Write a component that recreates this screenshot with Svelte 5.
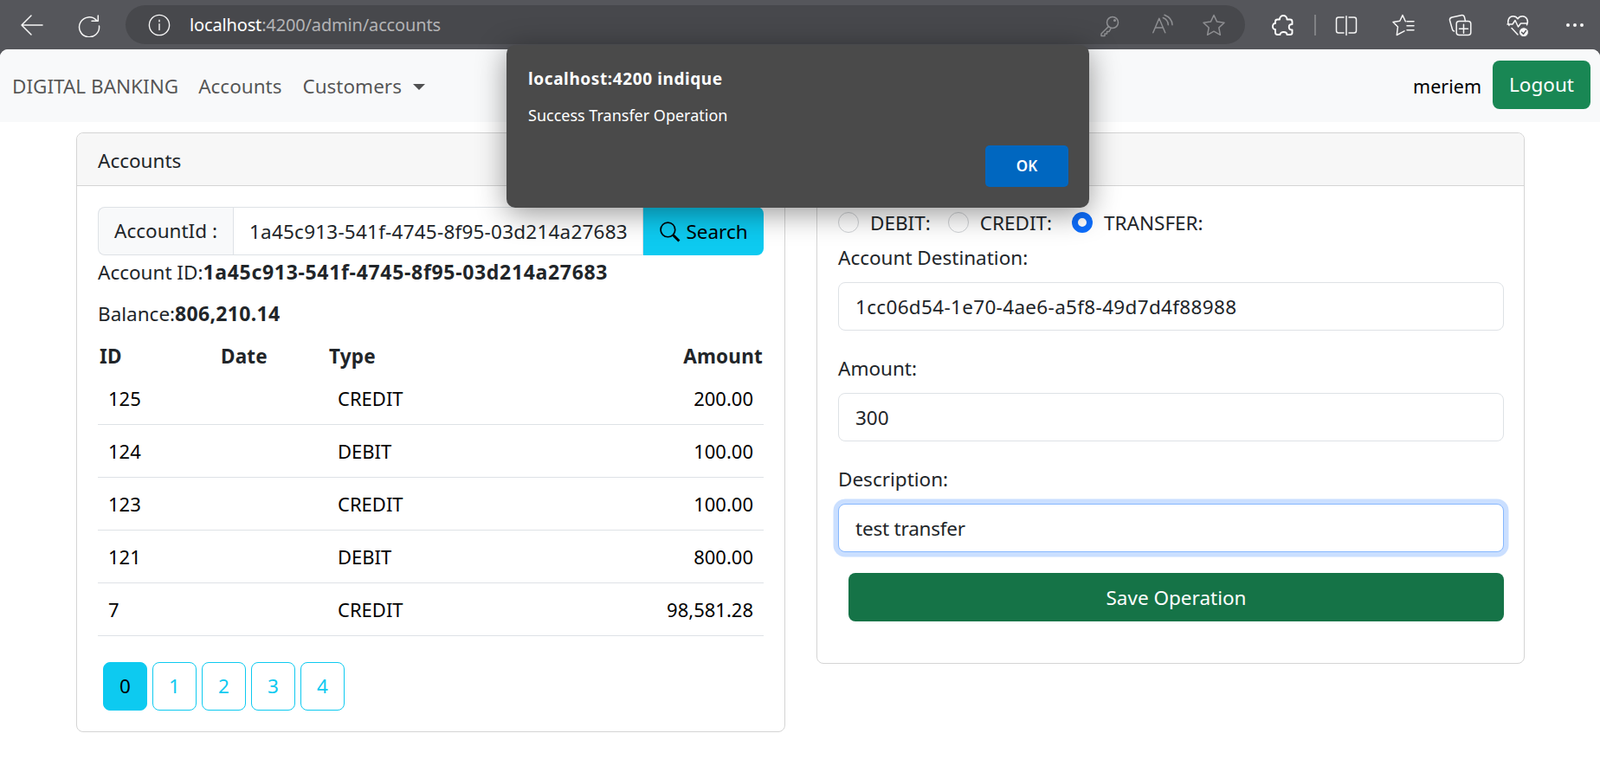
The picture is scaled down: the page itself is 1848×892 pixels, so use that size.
<script>
  const rows = [
    { id: '125', type: 'CREDIT', amount: '200.00' },
    { id: '124', type: 'DEBIT', amount: '100.00' },
    { id: '123', type: 'CREDIT', amount: '100.00' },
    { id: '121', type: 'DEBIT', amount: '800.00' },
    { id: '7', type: 'CREDIT', amount: '98,581.28' }
  ];
  const pages = [0, 1, 2, 3, 4];
</script>

<div class="window">
  <header class="toolbar">
    <svg class="ic back" viewBox="0 0 28 28"><path d="M26 14H2M13 3L2 14l11 11"/></svg>
    <svg class="ic reload" viewBox="0 0 28 28"><path d="M22.500 8.500A11.500 11.500 0 1 0 25.500 15M24.300 3v6.300H17"/></svg>
    <div class="omnibox">
      <svg class="ic info" viewBox="0 0 28 28"><circle cx="14" cy="14" r="12.500"/><path d="M14 12.500v7.500M14 7.800v1.800"/></svg>
      <span class="url"><b>localhost</b>:4200/admin/accounts</span>
      <div class="omni-right">
        <svg class="ic dim" viewBox="0 0 28 28"><circle cx="17" cy="11" r="6.500"/><path d="M12.500 15.500L4 24v2.500h4v-2.500h2.500v-2.500h2.500l2-3.500"/><circle cx="19.500" cy="8.500" r=".8"/></svg>
        <svg class="ic dim" viewBox="0 0 28 28"><path d="M3.800 22.800L10.800 6.200L17.800 22.800M6.300 17h9M15.300 5.500c3.500 1.500 6 4.500 6 8.300M17 2.200c5 2 9 6 9 11.600"/></svg>
        <svg class="ic dim" viewBox="0 0 28 28"><path d="M14 2.500l3.600 7.600 8.400 1.100-6.200 5.800 1.600 8.300-7.400-4.100-7.400 4.100 1.600-8.300L2 11.200l8.400-1.100z"/></svg>
      </div>
    </div>
    <div class="tools">
      <svg class="ic strong" viewBox="0 0 28 28"><path d="M10 7.500c0-6 8.500-6 8.500 0h3.500c1.500 0 2.500 1 2.500 2.500v3c-5 0-5 6.500 0 6.500v3.500c0 1-1 2-2.500 2h-3.500c0-4-8-4-8 0H7.500c-1.500 0-2.500-1-2.500-2.500V19c-4 .5-4-7.500 0-7V10c0-1.500 1-2.500 2.500-2.500z"/></svg>
      <span class="sep"></span>
      <svg class="ic" viewBox="0 0 28 28"><path d="M11 5H5c-1.500 0-2.500 1-2.500 2.500v13c0 1.500 1 2.500 2.500 2.500h6M17 5h6c1.500 0 2.500 1 2.500 2.500v13c0 1.500-1 2.500-2.500 2.500h-6M14 3.800v21.700"/></svg>
      <svg class="ic" viewBox="0 0 28 28"><path d="M16.300 9.800L13 2.500L9.800 9.300L2 10.500L7.500 16L6.300 25.500L15 20.800M18 9.800h8M18 14.800h8M18 19.800h8"/></svg>
      <svg class="ic" viewBox="0 0 28 28"><rect x="9.200" y="9.500" width="16.600" height="16" rx="3"/><path d="M17.500 13.200v10M12.500 18.200h10M19.500 9.500L18.500 5c-.4-1.700-1.500-2.600-3-2.500L4 5c-2 .5-2.800 1.800-2.500 3.500L4.500 19c.3 1.200 1 1.800 2 2"/></svg>
      <svg class="ic" viewBox="0 0 28 28"><path d="M4 14.500C1 9 4 3.800 8.500 3.800c2.500 0 4.500 1.200 5.500 3 1-1.800 3-3 5.500-3 4.500 0 7.500 5 5 10M2 13h6l3-4.500 3.500 7.500 3-4h7.500M7 17.500l7 7.500"/><circle class="solid" cx="21" cy="22.200" r="5.500"/><path class="check" d="M18.500 22.200l2 2 3-3.800"/></svg>
      <span class="dots"><i></i><i></i><i></i></span>
    </div>
  </header>

  <main class="page">
    <nav class="navbar">
      <span class="brand">DIGITAL BANKING</span>
      <span class="link">Accounts</span>
      <span class="link">Customers<i class="caret"></i></span>
      <span class="spacer"></span>
      <span class="user">meriem</span>
      <button class="logout">Logout</button>
    </nav>

    <div class="columns">
      <section class="card">
        <div class="card-head">Accounts</div>
        <div class="card-body left-body">
          <div class="group">
            <span class="addon">AccountId :</span>
            <input class="gi" value="1a45c913-541f-4745-8f95-03d214a27683" />
            <button class="search">
              <svg viewBox="0 0 24 24"><circle cx="10" cy="10" r="8"/><path class="thick" d="M16 16l6.500 6.500"/></svg>
              Search
            </button>
          </div>
          <p class="line first">Account ID:<b>1a45c913-541f-4745-8f95-03d214a27683</b></p>
          <p class="line second">Balance:<b>806,210.14</b></p>
          <table>
            <thead>
              <tr><th class="c1">ID</th><th class="c2">Date</th><th class="c3">Type</th><th class="num">Amount</th></tr>
            </thead>
            <tbody>
              {#each rows as r}
                <tr><td class="tid">{r.id}</td><td></td><td class="ttype">{r.type}</td><td class="num">{r.amount}</td></tr>
              {/each}
            </tbody>
          </table>
          <div class="pager">
            {#each pages as p}
              <button class="pg" class:active={p === 0}>{p}</button>
            {/each}
          </div>
        </div>
      </section>

      <section class="card right">
        <div class="card-head"></div>
        <div class="card-body">
          <div class="radios">
            <span class="radio"></span><span class="rl r1">DEBIT:</span>
            <span class="radio"></span><span class="rl r2">CREDIT:</span>
            <span class="radio on"></span><span class="rl">TRANSFER:</span>
          </div>
          <label class="lab">Account Destination:</label>
          <input class="fc uuid" value="1cc06d54-1e70-4ae6-a5f8-49d7d4f88988" />
          <label class="lab next">Amount:</label>
          <input class="fc" value="300" />
          <label class="lab next">Description:</label>
          <input class="fc focus" value="test transfer" />
          <div class="save-wrap"><button class="save">Save Operation</button></div>
        </div>
      </section>
    </div>
  </main>

  <div class="dialog" role="alertdialog">
    <div class="d-title">localhost:4200 indique</div>
    <div class="d-msg">Success Transfer Operation</div>
    <div class="d-foot"><button class="ok">OK</button></div>
  </div>
</div>

<style>
  :global(body) {
    margin: 0;
    background: #55565b;
    overflow: hidden;
  }
  .window {
    width: 1848px;
    height: 892px;
    position: relative;
    overflow: hidden;
    display: flex;
    flex-direction: column;
    font-family: "Noto Sans", "Open Sans", sans-serif;
    font-size: 22.500px;
    line-height: 35px;
    color: #212529;
  }
  button, input { font: inherit; }
  .toolbar {
    height: 57px;
    flex: none;
    display: flex;
    align-items: flex-start;
    background: #55565b;
    box-sizing: border-box;
    padding: 6px 15px 0 23px;
  }
  .ic {
    width: 28px;
    height: 28px;
    fill: none;
    stroke: #f6f6f6;
    stroke-width: 1.500;
    stroke-linecap: round;
    stroke-linejoin: round;
    flex: none;
  }
  .ic .solid { fill: #f6f6f6; stroke: #55565b; stroke-width: 1; }
  .ic .check { stroke: #55565b; stroke-width: 1.500; }
  .strong { stroke-width: 1.900; stroke: #fff; }
  .back, .reload { margin-top: 8.500px; }
  .reload { margin-left: 38px; margin-right: 28px; }
  .omnibox {
    width: 1293px;
    height: 45px;
    background: #47484c;
    border-radius: 23px;
    display: flex;
    align-items: center;
    padding-left: 26px;
    box-sizing: border-box;
  }
  .info { width: 26px; height: 26px; }
  .url {
    margin-left: 22px;
    font-size: 20px;
    color: #b4b4b6;
    letter-spacing: -0.150px;
  }
  .url b { font-weight: 400; color: #fff; }
  .omni-right {
    margin-left: auto;
    display: flex;
    gap: 32px;
    padding-right: 22px;
  }
  .dim { stroke: #8e8f92; stroke-width: 1.500; }
  .tools {
    display: flex;
    align-items: center;
    height: 45px;
    margin-left: 30px;
    gap: 38px;
  }
  .sep {
    width: 2px;
    height: 24px;
    background: #808185;
    margin: 0 -17.500px 0 -16px;
  }
  .dots { display: flex; gap: 4px; width: 28px; justify-content: center; }
  .dots i { width: 4px; height: 4px; border-radius: 50%; background: #f6f6f6; }

  .page {
    flex: 1;
    background: #fff;
    border-radius: 9px 9px 0 0;
    min-height: 0;
  }
  .navbar {
    height: 84px;
    background: #f8f9fa;
    display: flex;
    align-items: center;
    padding: 0 11px 0 14px;
    border-radius: 9px 9px 0 0;
    color: rgba(0, 0, 0, .68);
  }
  .brand { margin-right: 23px; }
  .link { margin-right: 24px; }
  .caret {
    display: inline-block;
    width: 0;
    height: 0;
    margin-left: 13px;
    vertical-align: 4px;
    border: 7px solid transparent;
    border-top-color: rgba(0, 0, 0, .68);
    border-bottom-width: 0;
  }
  .spacer { flex: 1; }
  .user { color: #000; margin-right: 13px; font-size: 21.500px; }
  .logout {
    width: 113px;
    height: 56px;
    background: #198754;
    border: 0;
    border-radius: 8px;
    color: #fff;
    padding: 0;
    margin-bottom: 3px;
  }
  .columns {
    display: grid;
    grid-template-columns: 819px 818px;
    gap: 36px;
    padding: 12px 0 0 88px;
    align-items: start;
  }
  .card {
    border: 1px solid #d4d4d4;
    border-radius: 8px;
    box-sizing: border-box;
    background: #fff;
    height: 693px;
  }
  .right { height: 614px; }
  .card-head {
    height: 61px;
    background: #f7f7f7;
    border-bottom: 1px solid #d4d4d4;
    border-radius: 8px 8px 0 0;
    padding: 14px 24px 0;
    box-sizing: border-box;
  }
  .card-body { padding: 24px 24px 0; }
  .group {
    display: flex;
    height: 56px;
    border-radius: 8px;
  }
  .addon {
    width: 156px;
    flex: none;
    box-sizing: border-box;
    background: #f8f9fa;
    border: 1px solid #dee2e6;
    border-right: 0;
    border-radius: 8px 0 0 8px;
    text-align: center;
    line-height: 54px;
  }
  .gi {
    flex: 1;
    min-width: 0;
    box-sizing: border-box;
    border: 1px solid #dee2e6;
    padding: 0 18px;
    color: #212529;
    outline: 0;
    letter-spacing: .220px;
  }
  .search {
    width: 139px;
    flex: none;
    border: 0;
    background: #0dcaf0;
    border-radius: 0 8px 8px 0;
    padding: 0;
    color: #000;
    display: flex;
    align-items: center;
    justify-content: center;
    gap: 6px;
  }
  .search svg {
    width: 25px;
    height: 25px;
    fill: none;
    stroke: #000;
    stroke-width: 1.600;
  }
  .search .thick { stroke-width: 2.800; }
  .line { margin: 0; }
  .first { margin-top: 1.500px; }
  .second { margin-top: 13px; }
  .line b { font-weight: 700; font-size: 23px; }
  .first b { letter-spacing: .680px; }
  .second b { letter-spacing: .300px; }
  table {
    width: 769px;
    border-collapse: collapse;
    table-layout: fixed;
    margin-top: 14.500px;
  }
  th {
    text-align: left;
    padding: 0;
    font-weight: 700;
    height: 34px;
    vertical-align: middle;
    letter-spacing: .200px;
  }
  th.num { text-align: right; padding-right: 1px; }
  .c1 { width: 142px; padding-left: 2px; box-sizing: border-box; }
  .c2 { width: 125px; }
  .c3 { width: 250px; }
  td {
    padding: 2px 12px 0;
    height: 61px;
    box-sizing: border-box;
    border-bottom: 1px solid #dee2e6;
    color: #000;
    font-size: 22px;
  }
  td.ttype { padding-left: 10px; }
  td.num { text-align: right; }
  .pager {
    display: flex;
    gap: 6px;
    margin-top: 30px;
    margin-left: 6px;
  }
  .pg {
    width: 51px;
    height: 56px;
    box-sizing: border-box;
    background: #fff;
    border: 1px solid #0dcaf0;
    border-radius: 8px;
    color: #0dcaf0;
    padding: 0;
  }
  .pg.active { background: #0dcaf0; color: #000; }

  .radios {
    display: flex;
    align-items: center;
    height: 35px;
  }
  .radio {
    width: 24px;
    height: 24px;
    box-sizing: border-box;
    border: 1px solid #cfd2d5;
    border-radius: 50%;
    background: #fff;
    flex: none;
  }
  .radio.on { border: 7.500px solid #0d6efd; }
  .rl { margin-left: 13px; padding-top: 2px; }
  .r1 { margin-right: 20px; }
  .r2 { margin-right: 23px; }
  .lab { display: block; margin-top: 5.500px; margin-bottom: 11.500px; }
  .lab.next { margin-top: 25.500px; }
  .fc {
    display: block;
    width: 769px;
    height: 56px;
    box-sizing: border-box;
    border: 1px solid #dee2e6;
    border-radius: 8px;
    padding: 0 19px;
    color: #212529;
    outline: 0;
  }
  .fc.uuid { letter-spacing: .330px; }
  .fc.focus {
    border-color: #86b7fe;
    box-shadow: 0 0 0 5.500px rgba(13, 110, 253, .22);
    letter-spacing: -.200px;
  }
  .save-wrap { padding: 24px 0 0 12px; }
  .save {
    width: 757px;
    height: 56px;
    border: 0;
    border-radius: 8px;
    background: #157347;
    color: #fff;
    padding: 0;
  }

  .dialog {
    position: absolute;
    left: 585px;
    top: 52px;
    width: 673px;
    height: 188px;
    box-sizing: border-box;
    background: #4a4a4a;
    border-radius: 10px;
    box-shadow: 0 6px 34px rgba(0, 0, 0, .42);
    color: #fff;
    padding: 21px 24px 0 25px;
    font-size: 18px;
    line-height: 36px;
  }
  .d-title { font-weight: 700; font-size: 19px; letter-spacing: .600px; }
  .d-msg { margin-top: 6px; }
  .d-foot { display: flex; justify-content: flex-end; margin-top: 17px; }
  .ok {
    width: 96px;
    height: 48px;
    border: 0;
    border-radius: 5px;
    background: #0067c0;
    color: #fff;
    font-weight: 600;
    font-size: 17px;
    padding: 0;
  }
</style>
